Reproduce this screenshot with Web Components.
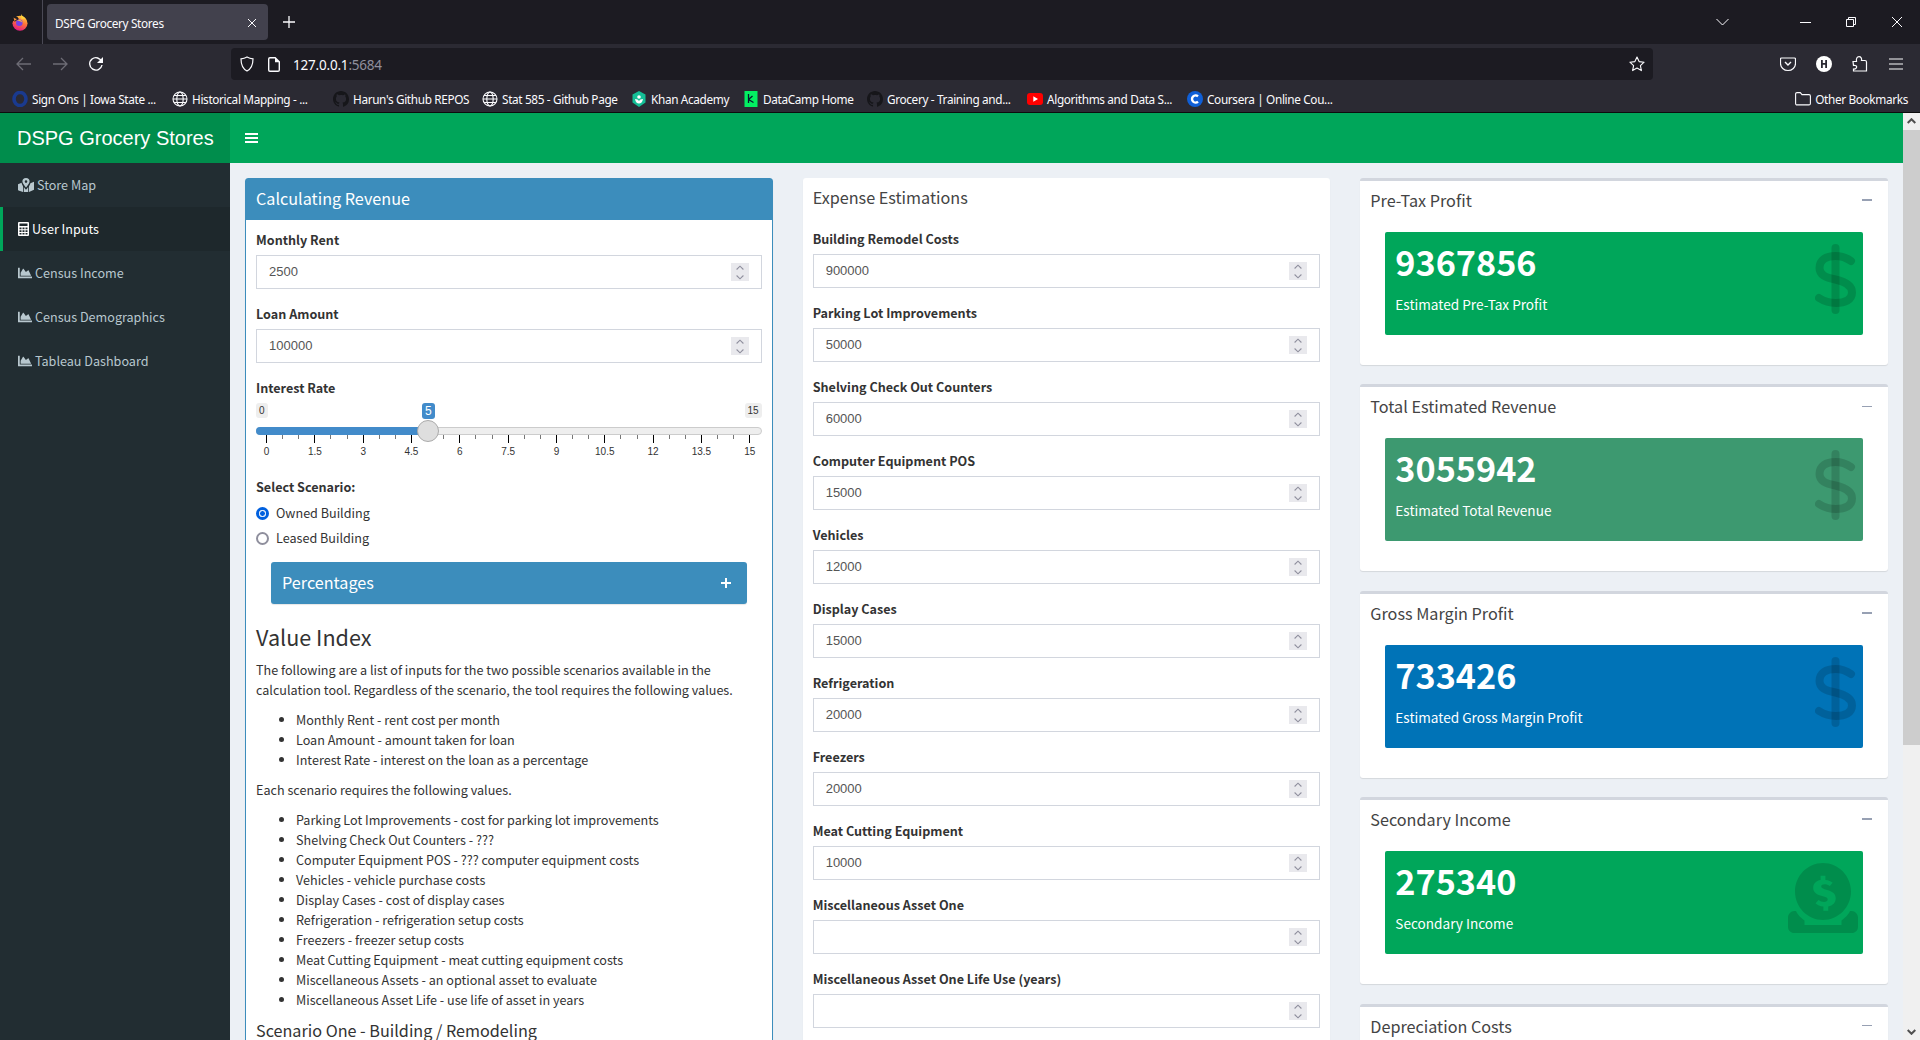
<!DOCTYPE html>
<html>
<head>
<meta charset="utf-8">
<title>DSPG Grocery Stores</title>
<style>
  html, body { margin: 0; height: 100%; overflow: hidden; background: #ecf0f5 }
  body { font: 12.6px/20px "Noto Sans CJK SC", "Noto Sans", sans-serif; color: #333; display: flex; flex-direction: column }
  dash-app { flex: 1; min-height: 0 }
</style>
</head>
<body>
<browser-chrome>
  <bookmark-item icon="ring" w="160">Sign Ons | Iowa State ...</bookmark-item>
  <bookmark-item icon="globe" w="161">Historical Mapping - ...</bookmark-item>
  <bookmark-item icon="github" w="149">Harun's Github REPOS</bookmark-item>
  <bookmark-item icon="globe" w="149">Stat 585 - Github Page</bookmark-item>
  <bookmark-item icon="khan" w="112">Khan Academy</bookmark-item>
  <bookmark-item icon="datacamp" w="124">DataCamp Home</bookmark-item>
  <bookmark-item icon="github" w="160">Grocery - Training and...</bookmark-item>
  <bookmark-item icon="youtube" w="160">Algorithms and Data S...</bookmark-item>
  <bookmark-item icon="coursera" w="150">Coursera | Online Cou...</bookmark-item>
</browser-chrome>

<dash-app brand="DSPG Grocery Stores">
  <nav-item slot="nav" icon="map">Store Map</nav-item>
  <nav-item slot="nav" icon="calc" active>User Inputs</nav-item>
  <nav-item slot="nav" icon="chart">Census Income</nav-item>
  <nav-item slot="nav" icon="chart">Census Demographics</nav-item>
  <nav-item slot="nav" icon="chart">Tableau Dashboard</nav-item>

  <dash-box variant="primary" title="Calculating Revenue">
    <num-field label="Monthly Rent" value="2500"></num-field>
    <num-field label="Loan Amount" value="100000"></num-field>
    <range-slider label="Interest Rate" min="0" max="15" value="5"></range-slider>
    <radio-group label="Select Scenario:">
      <radio-option checked>Owned Building</radio-option>
      <radio-option>Leased Building</radio-option>
    </radio-group>
    <collapsed-panel title="Percentages"></collapsed-panel>
    <help-text></help-text>
  </dash-box>

  <dash-box slot="second" variant="plain" title="Expense Estimations">
    <num-field label="Building Remodel Costs" value="900000"></num-field>
    <num-field label="Parking Lot Improvements" value="50000"></num-field>
    <num-field label="Shelving Check Out Counters" value="60000"></num-field>
    <num-field label="Computer Equipment POS" value="15000"></num-field>
    <num-field label="Vehicles" value="12000"></num-field>
    <num-field label="Display Cases" value="15000"></num-field>
    <num-field label="Refrigeration" value="20000"></num-field>
    <num-field label="Freezers" value="20000"></num-field>
    <num-field label="Meat Cutting Equipment" value="10000"></num-field>
    <num-field label="Miscellaneous Asset One" value=""></num-field>
    <num-field label="Miscellaneous Asset One Life Use (years)" value=""></num-field>
  </dash-box>

  <div slot="third">
    <result-box title="Pre-Tax Profit" value="9367856" label="Estimated Pre-Tax Profit" color="#00a65a"></result-box>
    <result-box title="Total Estimated Revenue" value="3055942" label="Estimated Total Revenue" color="#3d9970"></result-box>
    <result-box title="Gross Margin Profit" value="733426" label="Estimated Gross Margin Profit" color="#0073b7"></result-box>
    <result-box title="Secondary Income" value="275340" label="Secondary Income" color="#00a65a" icon="coin"></result-box>
    <result-box title="Depreciation Costs" value="" label="" color="#00a65a"></result-box>
  </div>
</dash-app>

<script>
const ICONS = {
  chart: '<svg viewBox="0 0 512 512" width="14" height="14"><path fill="currentColor" d="M500 384c6.6 0 12 5.4 12 12v40c0 6.6-5.4 12-12 12H12c-6.6 0-12-5.4-12-12V76c0-6.6 5.4-12 12-12h40c6.6 0 12 5.4 12 12v308h436zM372.7 159.5L288 216l-85.3-113.7c-5.1-6.8-15.5-6.3-19.9 1L96 248v104h384l-89.9-187.8c-3.2-6.5-11.4-8.7-17.4-4.7z"/></svg>',
  calc: '<svg viewBox="0 0 11 14" width="11" height="14"><path fill="currentColor" fill-rule="evenodd" d="M1 0h9a1 1 0 0 1 1 1v12a1 1 0 0 1-1 1H1a1 1 0 0 1-1-1V1a1 1 0 0 1 1-1zM1.500 1.500v2.500h8V1.500zM1.500 5.500v1.700h2v-1.700zM4.500 5.500v1.700h2v-1.700zM7.500 5.500v1.700h2v-1.700zM1.500 8.200v1.700h2v-1.700zM4.500 8.200v1.700h2v-1.700zM7.500 8.200v1.700h2v-1.700zM1.500 10.900v1.600h2v-1.600zM4.500 10.900v1.600h2v-1.600zM7.500 10.900v1.600h2v-1.600z"/></svg>',
  map: '<svg viewBox="0 0 16 14" width="16" height="14"><path fill="currentColor" d="M0 6.200l3.600-1.400c.2 1.500 1 2.800 1.400 3.500V14L.5 12.600 0 12zM5.800 9c.7 1 1.500 2 2.200 2.800.7-.8 1.500-1.800 2.200-2.800V14H5.800zM11 8.300c.6-.9 1.200-2 1.400-3l3.600-1.500V11.800L11 14zM8 0a3.600 3.600 0 0 1 3.600 3.600C11.600 5.300 9.200 8.200 8 9.600 6.800 8.200 4.400 5.300 4.400 3.600A3.600 3.600 0 0 1 8 0zm0 2.300a1.300 1.300 0 1 0 0 2.600 1.300 1.300 0 0 0 0-2.600z"/></svg>',
  dollar: '<svg viewBox="0 0 41 70" width="41" height="70"><g fill="none" stroke="currentColor" stroke-linecap="round" stroke-width="8"><path d="M20.500 4v62"/><path d="M36 17c-5-3.500-10-5-15.500-5C11 12 4.500 16 4.500 24c0 7 6 9.500 16 11.500 10 2.200 16.500 5.500 16.500 13 0 7.500-7 10.500-16 10.500-6 0-11.500-1.500-17-5"/></g></svg>',
  coin: '<svg viewBox="0 0 70 70" width="70" height="70"><path fill="currentColor" fill-rule="evenodd" d="M35 0c15.500 0 28 12.800 28 28.500S50.500 57 35 57 7 44.200 7 28.500 19.500 0 35 0zm2.400 12.800h-4.800v4.100c-4.600.7-7.400 3.800-7.400 7.900 0 4.800 3.700 6.800 8 8l3.400 1c2.100.6 3.100 1.400 3.100 2.700 0 1.500-1.500 2.500-3.700 2.500-2 0-4-.7-5.400-2l-3 3.300c1.800 1.800 4.500 3 7.800 3.300v4.100h4.800v-4.200c4.700-.8 7.500-4 7.500-8.200 0-4.700-3.300-6.800-7.700-8.100l-3.500-1c-2.100-.6-3.300-1.300-3.300-2.600 0-1.500 1.300-2.300 3.400-2.300 1.900 0 3.700.6 5.200 1.800l2.800-3.400c-1.800-1.500-4-2.500-7.200-2.800z"/><path fill="currentColor" d="M0 54.500c0-3.500 3-6.500 6-6.500h2c2 4 4 6 8.500 9.500v4.500h37v-4.500c4.500-3.500 6.500-5.500 8.500-9.500h2c3 0 6 3 6 6.500V64c0 3.500-3 6-6 6H6c-3 0-6-2.500-6-6z"/></svg>',
  ring: '<svg viewBox="0 0 16 16" width="16" height="16"><ellipse cx="8" cy="8" rx="6" ry="6.500" fill="none" stroke="#1a3a8f" stroke-width="3.600"/></svg>',
  globe: '<svg viewBox="0 0 16 16" width="16" height="16" fill="none" stroke="#fbfbfe" stroke-width="1.100"><circle cx="8" cy="8" r="7"/><ellipse cx="8" cy="8" rx="3.200" ry="7"/><path d="M1 8h14M2 4.500h12M2 11.500h12"/></svg>',
  github: '<svg viewBox="0 0 16 16" width="16" height="16"><path fill="#16161a" d="M8 0C3.580 0 0 3.580 0 8c0 3.540 2.290 6.530 5.470 7.590.4.070.55-.17.550-.38v-1.340c-2.230.48-2.700-1.070-2.700-1.070-.36-.93-.89-1.170-.89-1.170-.73-.5.050-.49.050-.49.800.060 1.230.830 1.230.830.710 1.220 1.870.870 2.330.660.070-.520.280-.870.510-1.070-1.780-.2-3.640-.890-3.640-3.950 0-.870.310-1.590.820-2.150-.080-.2-.360-1.020.080-2.120 0 0 .670-.210 2.200.820A7.650 7.650 0 0 1 8 4.040c.680 0 1.360.090 2 .270 1.530-1.040 2.200-.820 2.200-.820.440 1.100.160 1.920.080 2.120.510.560.820 1.270.820 2.150 0 3.070-1.870 3.750-3.650 3.950.290.250.540.730.540 1.480v2.200c0 .210.150.460.550.380A8.010 8.010 0 0 0 16 8c0-4.420-3.580-8-8-8z"/></svg>',
  khan: '<svg viewBox="0 0 16 16" width="16" height="16"><path fill="#14bf96" d="M8 0l6.500 3.500v8L8 16l-6.500-4.500v-8z"/><circle cx="8" cy="6" r="1.800" fill="#fff"/><path fill="#fff" d="M4 8c.5 3 2 4.500 4 4.500s3.500-1.500 4-4.500c-2 0-3.300.7-4 2-.7-1.300-2-2-4-2z"/></svg>',
  datacamp: '<svg viewBox="0 0 16 16" width="16" height="16"><rect x="1.500" width="13" height="16" fill="#03ef62"/><path fill="none" stroke="#05192d" stroke-width="1.300" d="M5.500 3v9M5.500 8.500l5 3M5.500 8.500L9.500 5"/></svg>',
  youtube: '<svg viewBox="0 0 16 16" width="16" height="16"><rect y="2" width="16" height="12" rx="3" fill="#f00"/><path fill="#fff" d="M6.300 5.200L11 8l-4.700 2.800z"/></svg>',
  coursera: '<svg viewBox="0 0 16 16" width="16" height="16"><circle cx="8" cy="8" r="8" fill="#0f5fd7"/><path fill="none" stroke="#fff" stroke-width="2.400" d="M11 5.300A3.600 3.600 0 1 0 11 10.700"/></svg>'
}

class BookmarkItem extends HTMLElement {
  constructor() {
    super()
    this.attachShadow({ mode: 'open' }).innerHTML = `
      <style>
        :host { display: flex; align-items: center; gap: 4px; flex: none; white-space: nowrap; height: 27px; color: #fbfbfe }
        svg { display: block; flex: none }
      </style>
      ${ICONS[this.getAttribute('icon')] || ''}<slot></slot>`
    this.style.width = this.getAttribute('w') + 'px'
  }
}

class BrowserChrome extends HTMLElement {
  constructor() {
    super()
    this.attachShadow({ mode: 'open' }).innerHTML = `
      <style>
        :host { display: block; flex: none; font: 11.8px/16px "Noto Sans", sans-serif; color: #fbfbfe; letter-spacing: -.35px }
        svg { display: block; flex: none }
        .strip { height: 44px; background: #1c1b22; display: flex; align-items: center; padding-left: 12px }
        .sep { width: 1px; height: 44px; background: #4a4955; margin-left: 14px; margin-right: 4px }
        .tab { width: 221px; height: 36px; box-sizing: border-box; background: #42414d; border-radius: 4px; display: flex; align-items: center; justify-content: space-between; padding: 1px 11px 0 8px }
        .plus { margin-left: 15px }
        .win { margin-left: auto; display: flex; align-items: center }
        .bar { height: 36px; background: #2b2a33; display: flex; align-items: flex-end; box-sizing: border-box; border-top: 4px solid #2b2a33 }
        .navs { width: 231px; height: 32px; display: flex; align-items: center; box-sizing: border-box; padding-left: 16px; gap: 20px }
        .url { width: 1422px; height: 32px; background: #1c1b22; border-radius: 4px; display: flex; align-items: center; box-sizing: border-box; padding: 0 8px; font-size: 13.500px; letter-spacing: -.2px }
        .url .host { color: #fbfbfe } .url .port { color: #8f8f9d }
        .url .text { margin-left: 13px; padding-top: 1px }
        .url .star { margin-left: auto }
        .tools { flex: 1; height: 32px; display: flex; align-items: center; padding-left: 127px; gap: 20px }
        .marks { height: 27px; padding-top: 5px; background: #2b2a33; display: flex; align-items: center; padding-left: 12px; border-bottom: 1px solid #0c0c0d }
        .other { margin-left: auto; display: flex; align-items: center; gap: 4px; padding-right: 12px }
      </style>
      <div class="strip">
        <svg width="16" height="17" viewBox="0 0 16 17"><defs><linearGradient id="fx" x1=".7" y1="0" x2=".3" y2="1"><stop offset="0" stop-color="#ffd33d"/><stop offset=".45" stop-color="#ff7139"/><stop offset="1" stop-color="#e31587"/></linearGradient></defs><circle cx="8" cy="9.300" r="7.500" fill="url(#fx)"/><path d="M9 0c.5 2 3.500 3 4.500 4.500L9.500 5z" fill="#ffd33d"/><path d="M0 3h5.500L7 5.300 3 7.500 0 6.500z" fill="#1c1b22"/><path d="M1.500 3.500c1 .8 2 1.200 3.500 1.500L2.500 7z" fill="#ff9640"/><circle cx="7.300" cy="8.800" r="3.300" fill="#7542e5"/><path d="M5 6.500c2-1.500 5-.5 5.500 2.300-1.500-1.500-3.500-2-5.500-2.300z" fill="#ffb13d"/></svg>
        <div class="sep"></div>
        <div class="tab"><span>DSPG Grocery Stores</span>
          <svg width="10" height="10" viewBox="0 0 10 10" stroke="#fbfbfe" stroke-width="1"><path d="M1 1l8 8M9 1l-8 8"/></svg></div>
        <svg class="plus" width="12" height="12" viewBox="0 0 12 12" stroke="#fbfbfe" stroke-width="1.300"><path d="M6 0v12M0 6h12"/></svg>
        <div class="win">
          <svg width="13" height="8" viewBox="0 0 13 8" fill="none" stroke="#fbfbfe"><path d="M.5 1l6 6 6-6"/></svg>
          <svg style="margin-left:71px" width="11" height="1" viewBox="0 0 11 1"><path d="M0 0h11v1H0z" fill="#fbfbfe"/></svg>
          <svg style="margin-left:35px" width="10" height="10" viewBox="0 0 10 10" fill="none" stroke="#fbfbfe"><path d="M.5 2.500h7v7h-7zM2.500 2.500v-2h7v7h-2"/></svg>
          <svg style="margin-left:36px;margin-right:18px" width="10" height="10" viewBox="0 0 10 10" stroke="#fbfbfe"><path d="M0 0l10 10M10 0L0 10"/></svg>
        </div>
      </div>
      <div class="bar">
        <div class="navs">
          <svg width="16" height="14" viewBox="0 0 16 14" fill="none" stroke="#6d6c75" stroke-width="1.300"><path d="M15 7H1M7 1L1 7l6 6"/></svg>
          <svg width="16" height="14" viewBox="0 0 16 14" fill="none" stroke="#6d6c75" stroke-width="1.300"><path d="M1 7h14M9 1l6 6-6 6"/></svg>
          <svg width="16" height="16" viewBox="0 0 16 16" fill="none" stroke="#fbfbfe" stroke-width="1.400"><path d="M13.800 6A6.200 6.200 0 1 0 14 9"/><path fill="#fbfbfe" stroke="none" d="M15 1v6H9z"/></svg>
        </div>
        <div class="url">
          <svg width="16" height="16" viewBox="0 0 16 16" fill="none" stroke="#fbfbfe" stroke-width="1.200"><path d="M8 1c2 1.200 4 1.700 6 1.800 0 5.500-1.500 10-6 12.200C3.500 12.800 2 8.300 2 2.800 4 2.700 6 2.200 8 1z"/></svg>
          <svg style="margin-left:13px" width="12" height="15" viewBox="0 0 12 15"><path fill-rule="evenodd" fill="#fbfbfe" d="M2 0h5.500L12 4.500V13a2 2 0 0 1-2 2H2a2 2 0 0 1-2-2V2a2 2 0 0 1 2-2zm0 1.400a.6.6 0 0 0-.6.6v11c0 .3.300.6.600.6h8c.3 0 .6-.3.6-.6V5.200H7V1.400z"/></svg>
          <span class="text"><span class="host">127.0.0.1</span><span class="port">:5684</span></span>
          <svg class="star" width="16" height="16" viewBox="0 0 16 16" fill="none" stroke="#fbfbfe" stroke-width="1.100" stroke-linejoin="round"><path d="M8 1l2.100 4.600 5 .6-3.700 3.400 1 5L8 12.100l-4.400 2.500 1-5L.9 6.200l5-.6z"/></svg>
        </div>
        <div class="tools">
          <svg width="16" height="16" viewBox="0 0 16 16" fill="none" stroke="#fbfbfe" stroke-width="1.200"><path d="M1.500 2h13c.6 0 1 .4 1 1v4.500a7.500 7 0 0 1-15 0V3c0-.6.400-1 1-1z"/><path d="M5 6l3 3 3-3" stroke-width="1.400"/></svg>
          <svg width="16" height="16" viewBox="0 0 16 16"><circle cx="8" cy="8" r="8" fill="#fff"/><path d="M5 4h1.800v3.100h2.400V4H11v8H9.200V8.700H6.800V12H5z" fill="#2b2a33"/></svg>
          <svg width="16" height="16" viewBox="0 0 16 16" fill="none" stroke="#fbfbfe" stroke-width="1.200"><path d="M1 5.500h3.500c-.5-3 .5-4.800 2.500-4.800s3 1.800 2.500 3.800h3.500c1 0 1.500.5 1.500 1.500V15H1.500v-2c4 .5 4.500-4.500 0-3.500z"/></svg>
          <svg width="16" height="12" viewBox="0 0 16 12" stroke="#fbfbfe" stroke-width="1.200"><path d="M1 1h14M1 6h14M1 11h14"/></svg>
        </div>
      </div>
      <div class="marks">
        <slot></slot>
        <div class="other">
          <svg width="16" height="14" viewBox="0 0 16 14" fill="none" stroke="#fbfbfe" stroke-width="1.100"><path d="M.6 2c0-.8.600-1.400 1.400-1.400h3.300l1.700 2h7c.8 0 1.400.6 1.400 1.400v7.500c0 .8-.6 1.400-1.400 1.400H2c-.8 0-1.400-.6-1.400-1.400z"/></svg>
          <span>Other Bookmarks</span>
        </div>
      </div>`
  }
}

class DashApp extends HTMLElement {
  constructor() {
    super()
    this.attachShadow({ mode: 'open' }).innerHTML = `
      <style>
        :host { display: grid; grid-template: 50px 1fr / 230px 1fr 17px; overflow: hidden }
        .logo { background: #008d4c; color: #fff; font: 20px/50px "Liberation Sans", sans-serif; padding-left: 17px }
        .nav { background: #00a65a; display: flex; align-items: center; padding-left: 15px }
        .bar { grid-row: 1 / 3; grid-column: 3; background: #f0f0f0; display: flex; flex-direction: column; align-items: center; justify-content: space-between; position: relative }
        .bar::before { content: ""; position: absolute; left: 0; right: 0; top: 17px; height: 615px; background: #cdcdcd }
        .bar svg { display: block; margin: 5px 0 }
        .side { background: #222d32; min-height: 0; overflow: hidden }
        .main { display: grid; grid-template-columns: repeat(3, 1fr); min-height: 0; overflow: hidden; align-items: start }
        .col { padding: 15px 15px 0; min-width: 0 }
      </style>
      <div class="logo">${this.getAttribute('brand')}</div>
      <div class="nav"><svg width="13" height="12" viewBox="0 0 13 12" fill="#fff"><path d="M0 1h13v2H0zM0 5h13v2H0zM0 9h13v2H0z"/></svg></div>
      <div class="bar">
        <svg width="9" height="6" viewBox="0 0 9 6" fill="none" stroke="#505050" stroke-width="2"><path d="M.7 5l3.800-3.800L8.300 5"/></svg>
        <svg width="9" height="6" viewBox="0 0 9 6" fill="none" stroke="#505050" stroke-width="2"><path d="M.7 1l3.800 3.800L8.300 1"/></svg>
      </div>
      <div class="side"><slot name="nav"></slot></div>
      <div class="main">
        <div class="col"><slot></slot></div>
        <div class="col"><slot name="second"></slot></div>
        <div class="col"><slot name="third"></slot></div>
      </div>`
  }
}

class NavItem extends HTMLElement {
  constructor() {
    super()
    const active = this.hasAttribute('active')
    this.attachShadow({ mode: 'open' }).innerHTML = `
      <style>
        :host { display: flex; align-items: center; height: 44px; box-sizing: border-box; padding-left: ${active ? 15 : 18}px; gap: 3px; white-space: nowrap;
          color: ${active ? '#fff' : '#b8c7ce'}; background: ${active ? '#1e282c' : 'none'}; border-left: ${active ? '3px solid #00a65a' : '0'} }
        svg { display: block; flex: none }
      </style>
      ${ICONS[this.getAttribute('icon')]}<slot></slot>`
  }
}

class DashBox extends HTMLElement {
  constructor() {
    super()
    const primary = this.getAttribute('variant') === 'primary'
    this.attachShadow({ mode: 'open' }).innerHTML = `
      <style>
        :host { display: block; background: #fff; border-radius: 3px; box-sizing: border-box; height: 1100px; box-shadow: 0 1px 1px rgba(0,0,0,.1);
          ${primary ? 'border: 1px solid #3c8dbc' : ''} }
        .head { font-size: 16.2px; line-height: 20px; padding: 9px 10px 12px; ${primary ? 'background: #3c8dbc; color: #fff' : 'color: #444'} }
        .body { padding: 10px }
      </style>
      <div class="head">${this.getAttribute('title')}</div>
      <div class="body"><slot></slot></div>`
  }
}

class NumField extends HTMLElement {
  constructor() {
    super()
    this.attachShadow({ mode: 'open' }).innerHTML = `
      <style>
        :host { display: block; height: 74px }
        label { display: block; font-weight: 700; line-height: 20px; margin-bottom: 5px }
        .input { height: 34px; box-sizing: border-box; border: 1px solid #d2d6de; display: flex; align-items: center; justify-content: space-between; padding: 0 4px 0 12px; background: #fff;
          font: 13px/20px "Liberation Sans", sans-serif; color: #555 }
        .spin { width: 18px; height: 18px; margin-right: 8px; background: #e9e9ed; display: flex; align-items: center; justify-content: center }
        svg { display: block }
      </style>
      <label>${this.getAttribute('label')}</label>
      <div class="input"><span>${this.getAttribute('value')}</span>
        <div class="spin"><svg width="8" height="15" viewBox="0 0 8 15" fill="none" stroke="#8f8f9d" stroke-width="1.100"><path d="M.6 4.500L4 1.200l3.400 3.300M.6 10.500L4 13.800l3.400-3.300"/></svg></div>
      </div>`
  }
}

class RangeSlider extends HTMLElement {
  constructor() {
    super()
    const min = +this.getAttribute('min'), max = +this.getAttribute('max'), val = +this.getAttribute('value')
    let ticks = ''
    for (let i = 0; i <= 30; i++) {
      const major = i % 3 === 0
      ticks += `<i class="${major ? 'major' : ''}">${major ? `<b>${i / 2}</b>` : ''}</i>`
    }
    this.attachShadow({ mode: 'open' }).innerHTML = `
      <style>
        :host { display: block; height: 99px }
        label { display: block; font-weight: 700; line-height: 20px }
        .wrap { position: relative; height: 66px; margin-top: 5px }
        .pill { position: absolute; top: 0; height: 15px; border-radius: 3px; background: #eee; font: 10px/15px "Liberation Sans", sans-serif; color: #333; padding: 0 3px; box-sizing: border-box }
        .track { position: absolute; left: 0; right: 0; top: 24px; height: 8px; box-sizing: border-box; background: #eee; border: 1px solid #ccc; border-radius: 4px }
        .fill { position: absolute; left: 0; top: 24px; height: 8px; width: 172px; background: #428bca; border-radius: 4px 0 0 4px }
        .handle { position: absolute; top: 17px; left: 161px; width: 22px; height: 22px; box-sizing: border-box; border-radius: 50%; background: #dedede; border: 1px solid #ababab }
        .ticks { position: absolute; left: 10px; right: 11px; top: 32px; display: flex; justify-content: space-between }
        i { display: block; width: 1px; height: 4px; background: #777; position: relative }
        i.major { height: 8px; background: #000 }
        b { position: absolute; top: 11px; left: 50%; transform: translateX(-50%); font: 10px/12px "Liberation Sans", sans-serif; color: #333 }
      </style>
      <label>${this.getAttribute('label')}</label>
      <div class="wrap">
        <span class="pill" style="left:0">${min}</span>
        <span class="pill" style="right:0">${max}</span>
        <div class="track"></div><div class="fill"></div>
        <span class="pill" style="left:166px;background:#428bca;color:#fff;height:16px;font-size:12px;line-height:16px">${val}</span>
        <div class="ticks">${ticks}</div>
        <div class="handle"></div>
      </div>`
  }
}

class RadioGroup extends HTMLElement {
  constructor() {
    super()
    this.attachShadow({ mode: 'open' }).innerHTML = `
      <style>
        :host { display: block }
        label { display: block; font-weight: 700; line-height: 20px; margin-bottom: 6px }
        .list { display: flex; flex-direction: column; gap: 5px }
      </style>
      <label>${this.getAttribute('label')}</label>
      <div class="list"><slot></slot></div>`
  }
}

class RadioOption extends HTMLElement {
  constructor() {
    super()
    const on = this.hasAttribute('checked')
    this.attachShadow({ mode: 'open' }).innerHTML = `
      <style>
        :host { display: flex; align-items: center; gap: 7px; height: 20px }
        .dot { width: 13px; height: 13px; box-sizing: border-box; border-radius: 50%; background: #fff; border: ${on ? '3px solid #0060df' : '2px solid #8f8f9d'}; position: relative }
        ${on ? '.dot::after { content: ""; position: absolute; inset: 0; border: 1px solid #fff; background: #0060df; border-radius: 50%; }' : ''}
      </style>
      <span class="dot"></span><slot></slot>`
  }
}

class CollapsedPanel extends HTMLElement {
  constructor() {
    super()
    this.attachShadow({ mode: 'open' }).innerHTML = `
      <style>
        :host { display: flex; align-items: center; justify-content: space-between; height: 42px; margin: 14px 15px 0; padding: 0 16px 0 11px; background: #3c8dbc; color: #fff; border-radius: 3px; font-size: 16.2px; box-shadow: 0 1px 1px rgba(0,0,0,.1) }
        span { margin-top: -3px }
        svg { display: block }
      </style>
      <span>${this.getAttribute('title')}</span>
      <svg width="10" height="10" viewBox="0 0 10 10" fill="#fff"><path d="M4 0h2v4h4v2H6v4H4V6H0V4h4z"/></svg>`
  }
}

class HelpText extends HTMLElement {
  constructor() {
    super()
    const li = (items) => '<ul>' + items.map((t) => `<li>${t}</li>`).join('') + '</ul>'
    this.attachShadow({ mode: 'open' }).innerHTML = `
      <style>
        :host { display: block; color: #333 }
        h3 { font-size: 21.6px; font-weight: 400; line-height: 26px; margin: 20px 0 10px }
        h4 { font-size: 16.2px; font-weight: 400; line-height: 20px; margin: 10px 0 }
        p { margin: 0 0 10px; line-height: 20px }
        ul { margin: 0 0 10px; padding-left: 40px }
        li { line-height: 20px }
      </style>
      <h3>Value Index</h3>
      <p>The following are a list of inputs for the two possible scenarios available in the calculation tool. Regardless of the scenario, the tool requires the following values.</p>
      ${li(['Monthly Rent - rent cost per month', 'Loan Amount - amount taken for loan', 'Interest Rate - interest on the loan as a percentage'])}
      <p>Each scenario requires the following values.</p>
      ${li(['Parking Lot Improvements - cost for parking lot improvements', 'Shelving Check Out Counters - ???', 'Computer Equipment POS - ??? computer equipment costs', 'Vehicles - vehicle purchase costs', 'Display Cases - cost of display cases', 'Refrigeration - refrigeration setup costs', 'Freezers - freezer setup costs', 'Meat Cutting Equipment - meat cutting equipment costs', 'Miscellaneous Assets - an optional asset to evaluate', 'Miscellaneous Asset Life - use life of asset in years'])}
      <h4>Scenario One - Building / Remodeling</h4>`
  }
}

class ResultBox extends HTMLElement {
  constructor() {
    super()
    const a = (n) => this.getAttribute(n) || ''
    const coin = a('icon') === 'coin'
    this.attachShadow({ mode: 'open' }).innerHTML = `
      <style>
        :host { display: block; height: 187px; margin-bottom: 19.4px; box-sizing: border-box; background: #fff; border-top: 3px solid #d2d6de; border-radius: 3px; box-shadow: 0 1px 1px rgba(0,0,0,.1) }
        .head { display: flex; align-items: center; justify-content: space-between; height: 38px; padding: 0 16px 0 10px; font-size: 16.2px; color: #444 }
        .minus { width: 10px; height: 1.500px; background: #97a0b3 }
        .card { margin: 13px 25px 0; height: 103px; box-sizing: border-box; padding: 8px 10px 10px; border-radius: 2px; color: #fff; position: relative; background: ${a('color')} }
        .num { font-size: 34.2px; font-weight: 700; line-height: 42px }
        .sub { margin-top: 12px; font-size: 13.6px; line-height: 20px }
        .icon { position: absolute; color: rgba(0,0,0,.15); top: 12px; right: ${coin ? 5 : 7}px }
        svg { display: block }
      </style>
      <div class="head"><span>${a('title')}</span><div class="minus"></div></div>
      <div class="card"><div class="num">${a('value')}</div><div class="sub">${a('label')}</div>
        <div class="icon">${ICONS[coin ? 'coin' : 'dollar']}</div></div>`
  }
}

customElements.define('bookmark-item', BookmarkItem)
customElements.define('browser-chrome', BrowserChrome)
customElements.define('dash-app', DashApp)
customElements.define('nav-item', NavItem)
customElements.define('dash-box', DashBox)
customElements.define('num-field', NumField)
customElements.define('range-slider', RangeSlider)
customElements.define('radio-group', RadioGroup)
customElements.define('radio-option', RadioOption)
customElements.define('collapsed-panel', CollapsedPanel)
customElements.define('help-text', HelpText)
customElements.define('result-box', ResultBox)
</script>
</body>
</html>
